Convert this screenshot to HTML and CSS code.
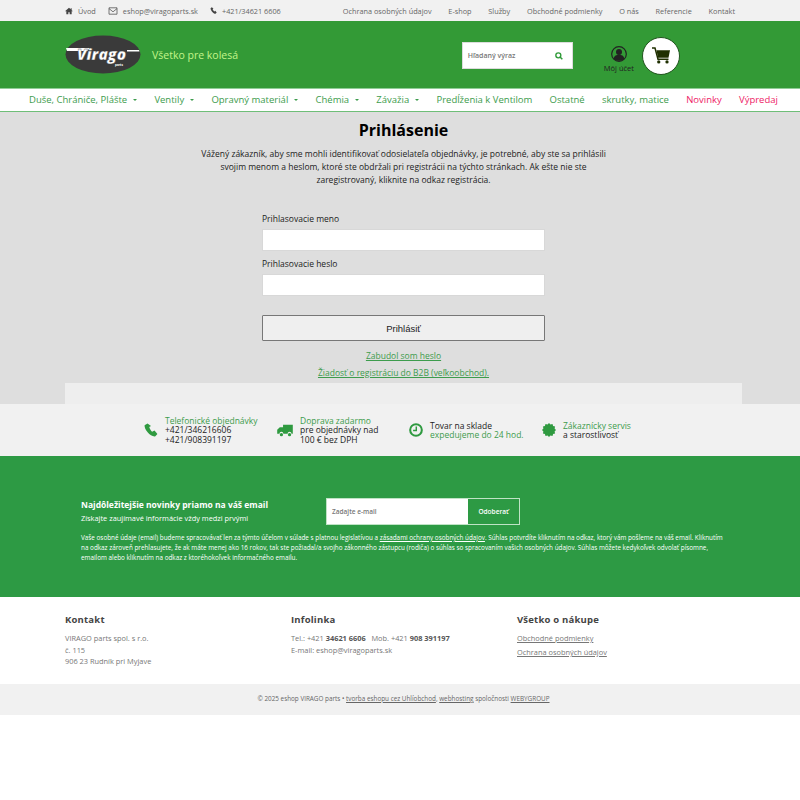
FILE: index.html
```html
<!DOCTYPE html>
<html lang="sk">
<head>
    <meta charset="UTF-8" />
    <title>Prihlásenie - VIRAGO parts</title>
    <link rel="stylesheet" href="styles.css">
</head>
<body>
    <div class="topbar">
        <div class="topbar-left">
            <a class="top-item" href="#">
                <svg width="8" height="8" viewBox="0 0 24 24"><path fill="#444" d="M12 2 0 13h4v9h6v-6h4v6h6v-9h4l-4-3.6V4h-3v2.7z"/></svg>
                <span>Úvod</span>
            </a>
            <a class="top-item" href="#">
                <svg width="10" height="8" viewBox="0 0 24 20"><path fill="none" stroke="#555" stroke-width="2" d="M2 2h20v16H2zM2 4l10 8 10-8"/></svg>
                <span>eshop@viragoparts.sk</span>
            </a>
            <a class="top-item" href="#">
                <svg width="7" height="7" viewBox="0 0 24 24"><path fill="#444" d="M6 1 2 4c-1 6 9 19 17 19l4-4-5-6-3 2c-2-1-5-5-6-8l3-2z"/></svg>
                <span>+421/34621 6606</span>
            </a>
        </div>
        <div class="topbar-right">
            <a href="#">Ochrana osobných údajov</a>
            <a href="#">E-shop</a>
            <a href="#">Služby</a>
            <a href="#">Obchodné podmienky</a>
            <a href="#">O nás</a>
            <a href="#">Referencie</a>
            <a href="#">Kontakt</a>
        </div>
    </div>

    <header class="header">
        <svg class="logo" width="76" height="39" viewBox="0 0 76 39">
            <ellipse cx="38" cy="19.500" rx="37.500" ry="19" fill="#3a3a3a"/>
            <path fill="#fff" d="M1 13h24l-3 3H2zM62 15h12l.5 1.500H62z"/>
            <text class="logo-text" x="12" y="25">Virago</text>
            <text class="logo-parts" x="50" y="31">parts</text>
        </svg>
        <div class="slogan">Všetko pre kolesá</div>
        <form class="search">
            <span>Hľadaný výraz</span>
            <svg width="8" height="8" viewBox="0 0 24 24"><circle cx="10" cy="10" r="7.500" fill="none" stroke="#2f9a38" stroke-width="4"/><path stroke="#2f9a38" stroke-width="4.500" d="m15 15 7 7"/></svg>
        </form>
        <a class="account" href="#">
            <svg width="16" height="16" viewBox="0 0 24 24">
                <circle cx="12" cy="12" r="11" fill="none" stroke="#222" stroke-width="1.800"/>
                <circle cx="12" cy="9" r="4.500" fill="#222"/>
                <path fill="#222" d="M4 19c1-5 4-6 8-6s7 1 8 6c-4 4-12 4-16 0z"/>
            </svg>
            <span>Môj účet</span>
        </a>
        <a class="cart" href="#">
            <svg width="18" height="17" viewBox="0 0 24 22">
                <path fill="#1f2f00" d="M6 4h18l-2 10H8z"/>
                <path fill="none" stroke="#1f2f00" stroke-width="2" d="M0 1h4l4 15h14"/>
                <circle cx="9" cy="19.500" r="2.200" fill="#1f2f00"/>
                <circle cx="20" cy="19.500" r="2.200" fill="#1f2f00"/>
            </svg>
        </a>
    </header>

    <nav class="menu">
        <a class="has-sub" href="#">Duše, Chrániče, Plášte</a>
        <a class="has-sub" href="#">Ventily</a>
        <a class="has-sub" href="#">Opravný materiál</a>
        <a class="has-sub" href="#">Chémia</a>
        <a class="has-sub" href="#">Závažia</a>
        <a href="#">Predĺženia k Ventilom</a>
        <a href="#">Ostatné</a>
        <a href="#">skrutky, matice</a>
        <a class="pink" href="#">Novinky</a>
        <a class="pink" href="#">Výpredaj</a>
    </nav>

    <main class="main">
        <h1>Prihlásenie</h1>
        <p class="intro">Vážený zákazník, aby sme mohli identifikovať odosielateľa objednávky, je potrebné, aby ste sa prihlásili svojim menom a heslom, ktoré ste obdržali pri registrácii na týchto stránkach. Ak ešte nie ste zaregistrovaný, kliknite na odkaz registrácia.</p>
        <form class="login">
            <label for="user">Prihlasovacie meno</label>
            <input id="user" type="text">
            <label for="pass">Prihlasovacie heslo</label>
            <input id="pass" type="password">
            <button type="button">Prihlásiť</button>
        </form>
        <a class="login-link" href="#">Zabudol som heslo</a>
        <a class="login-link" href="#">Žiadosť o registráciu do B2B (veľkoobchod).</a>
        <div class="main-end"></div>
    </main>

    <section class="benefits">
        <div class="benefit benefit-phone">
            <svg width="14" height="14" viewBox="0 0 24 24"><path fill="#2f9a40" d="M6 1 1 4c-1 7 10 20 18 19l4-4-5-6-4 2c-2-1-4-5-5-8l3-2z"/></svg>
            <div><em>Telefonické objednávky</em><br>+421/346216606<br>+421/908391197</div>
        </div>
        <div class="benefit benefit-truck">
            <svg width="16" height="13" viewBox="0 0 24 20"><path fill="#2f9a40" d="M9 1h15v14h-2a3 3 0 0 0-6 0H9.500a3 3 0 0 0-6 0H0V9l4-4h5z"/><circle cx="6.500" cy="16.500" r="2.500" fill="#2f9a40"/><circle cx="19" cy="16.500" r="2.500" fill="#2f9a40"/></svg>
            <div><em>Doprava zadarmo</em><br>pre objednávky nad<br>100 € bez DPH</div>
        </div>
        <div class="benefit benefit-clock">
            <svg width="14" height="14" viewBox="0 0 24 24"><circle cx="12" cy="12" r="10" fill="none" stroke="#2f9a40" stroke-width="3.500"/><path fill="none" stroke="#2f9a40" stroke-width="2.500" d="M12.500 6v7H7"/></svg>
            <div>Tovar na sklade<br><em>expedujeme do 24 hod.</em></div>
        </div>
        <div class="benefit benefit-servis">
            <svg width="14" height="14" viewBox="0 0 24 24"><path fill="#2f9a40" d="m12 0 2.500 2.400L18 1.600l1 3.400 3.400 1-.8 3.500L24 12l-2.400 2.500.8 3.500-3.400 1-1 3.400-3.500-.8L12 24l-2.500-2.400-3.500.8-1-3.400-3.400-1 .8-3.500L0 12l2.400-2.500L1.600 6 5 5l1-3.400 3.500.8z"/></svg>
            <div><em>Zákaznícky servis</em><br>a starostlivosť</div>
        </div>
    </section>

    <section class="newsletter">
        <div class="news-top">
            <div class="news-title">
                <strong>Najdôležitejšie novinky priamo na váš email</strong>
                <span>Získajte zaujímavé informácie vždy medzi prvými</span>
            </div>
            <form class="news-form">
                <span class="news-input">Zadajte e-mail</span>
                <span class="news-btn">Odoberať</span>
            </form>
        </div>
        <p class="news-note">Vaše osobné údaje (email) budeme spracovávať len za týmto účelom v súlade s platnou legislatívou a <a href="#">zásadami ochrany osobných údajov</a>. Súhlas potvrdíte kliknutím na odkaz, ktorý vám pošleme na váš email. Kliknutím na odkaz zároveň prehlasujete, že ak máte menej ako 16 rokov, tak ste požiadal/a svojho zákonného zástupcu (rodiča) o súhlas so spracovaním vašich osobných údajov. Súhlas môžete kedykoľvek odvolať písomne, emailom alebo kliknutím na odkaz z ktoréhokoľvek informačného emailu.</p>
    </section>

    <footer class="footer">
        <div class="foot-col">
            <h3>Kontakt</h3>
            <p>VIRAGO parts spol. s r.o.<br>č. 115<br>906 23 Rudník pri Myjave</p>
        </div>
        <div class="foot-col">
            <h3>Infolinka</h3>
            <p>Tel.: +421 <b>34621 6606</b> &nbsp; Mob. +421 <b>908 391197</b><br>E-mail: eshop@viragoparts.sk</p>
        </div>
        <div class="foot-col foot-links">
            <h3>Všetko o nákupe</h3>
            <a href="#">Obchodné podmienky</a>
            <a href="#">Ochrana osobných údajov</a>
        </div>
    </footer>

    <div class="copyright">© 2025 eshop VIRAGO parts • <a href="#">tvorba eshopu cez Uhlíobchod</a>, <a href="#">webhosting</a> spoločnosti <a href="#">WEBYGROUP</a></div>
</body>
</html>
```

FILE: styles.css
```css
* { box-sizing: border-box; }

body {
    margin: 0;
    background: #fff;
    font-family: 'Open Sans', 'Noto Sans', sans-serif;
    color: #222;
}

a { color: inherit; text-decoration: none; }

.topbar {
    height: 21px;
    background: #f1f1f1;
    padding: 0 65px;
    display: flex;
    justify-content: space-between;
    align-items: center;
    font-size: 7.300px;
    color: #666;
}
.topbar-left { display: flex; gap: 12px; }
.top-item { display: flex; align-items: center; gap: 5px; }
.topbar-right { display: flex; gap: 16.800px; }

.header {
    height: 68px;
    background: #339a36;
    border-bottom: 1px solid #8fce96;
    padding: 0 120px 0 65px;
    display: flex;
    align-items: center;
}
.logo { flex: none; }
.logo-text {
    font-size: 15.500px;
    font-weight: 800;
    font-style: italic;
    fill: #fff;
    stroke: #3a3a3a;
    stroke-width: 0.300px;
}
.logo-parts {
    font-size: 3px;
    font-weight: 700;
    fill: #fff;
}
.slogan {
    margin-left: 11px;
    font-size: 10.500px;
    color: #c4f58a;
    flex: 1;
}
.search {
    width: 111px;
    height: 27px;
    margin-top: 2px;
    background: #fff;
    border: 1px solid #dcdcdc;
    padding: 0 9px 0 5px;
    display: flex;
    justify-content: space-between;
    align-items: center;
    font-size: 7px;
    font-weight: 600;
    color: #777;
}
.account {
    margin: 9px 0 0 31px;
    display: flex;
    flex-direction: column;
    align-items: center;
    gap: 1px;
    font-size: 7.500px;
    color: #222;
}
.cart {
    margin: 2px 0 0 8px;
    width: 38px;
    height: 38px;
    border-radius: 50%;
    background: #fff;
    border: 1px solid #22551f;
    display: flex;
    justify-content: center;
    align-items: center;
}

.menu {
    height: 23px;
    background: #fff;
    border-bottom: 1px solid #6fbe78;
    padding: 0 22px 2px 29px;
    display: flex;
    justify-content: space-between;
    align-items: center;
    font-size: 9.500px;
    color: #3d9c4d;
}
.has-sub::after {
    content: "";
    display: inline-block;
    margin-left: 6px;
    vertical-align: 2px;
    border: 2.500px solid transparent;
    border-top-color: #3d9c4d;
    border-bottom: 0;
}
.pink { color: #ee2266; }

.main {
    height: 292px;
    background: #dedede;
    padding: 7px 58px 0 65px;
    display: flex;
    flex-direction: column;
    align-items: center;
}
h1 {
    margin: 0;
    font-size: 16px;
    line-height: 22px;
    font-weight: 700;
    color: #000;
}
.intro {
    width: 410px;
    margin: 6px 0 0;
    font-size: 8.500px;
    line-height: 13px;
    text-align: center;
    color: #222;
}
.login {
    width: 283px;
    margin-top: 26px;
    display: flex;
    flex-direction: column;
}
.login label {
    font-size: 8.500px;
    line-height: 13px;
    margin-bottom: 4px;
}
.login input {
    height: 22px;
    border: 1px solid #d8d8d8;
    background: #fff;
    margin-bottom: 6px;
}
.login button {
    height: 26px;
    margin-top: 13px;
    background: #efefef;
    border: 1px solid #777;
    border-radius: 1px;
    font-family: 'Liberation Sans', Arial, sans-serif;
    font-size: 9.500px;
    color: #222;
}
.login-link {
    margin-top: 10px;
    font-size: 8.500px;
    line-height: 10px;
    color: #3d9c4d;
    text-decoration: underline;
}
.login-link + .login-link { margin-top: 7px; }
.main-end {
    width: 677px;
    height: 21px;
    margin-top: auto;
    background: #eee;
}

.benefits {
    height: 52px;
    background: #f1f1f1;
    padding-left: 144px;
    display: flex;
    align-items: center;
    font-size: 8.500px;
    line-height: 9.500px;
    color: #222;
}
.benefit { display: flex; align-items: center; gap: 7px; }
.benefit em { font-style: normal; color: #3d9c4d; }
.benefit-phone { width: 133px; }
.benefit-truck { width: 132px; }
.benefit-clock { width: 133px; }

.newsletter {
    height: 141px;
    background: #2d9a44;
    padding: 42px 74px 0 81px;
    color: #fff;
}
.news-top { display: flex; }
.news-title {
    width: 245px;
    display: flex;
    flex-direction: column;
    gap: 2px;
    padding-top: 1px;
}
.news-title strong { font-size: 8.500px; line-height: 12px; }
.news-title span { font-size: 7.400px; line-height: 11px; }
.news-form {
    width: 194px;
    height: 27px;
    border: 1px solid #bfe3c5;
    display: flex;
    font-size: 6.500px;
    font-weight: 600;
}
.news-input {
    width: 141px;
    background: #fff;
    color: #777;
    padding-left: 5px;
    line-height: 25px;
}
.news-btn {
    flex: 1;
    text-align: center;
    line-height: 25px;
}
.news-note {
    margin: 8px 0 0;
    font-size: 6.350px;
    line-height: 10px;
}
.news-note a { text-decoration: underline; }

.footer {
    height: 87px;
    padding: 16px 65px 0;
    display: grid;
    grid-template-columns: 226px 226px 1fr;
    color: #777;
    font-size: 7.400px;
}
.foot-col h3 {
    margin: 0 0 6px;
    font-size: 9.500px;
    line-height: 14px;
    font-weight: 700;
    color: #444;
    letter-spacing: 0.200px;
}
.foot-col p { margin: 0; line-height: 11.500px; }
.foot-col b { font-weight: 700; color: #555; }
.foot-links a {
    display: block;
    line-height: 11.500px;
    margin-bottom: 2.500px;
    text-decoration: underline;
}

.copyright {
    height: 31px;
    background: #f1f1f1;
    padding-left: 7px;
    text-align: center;
    font-size: 6.350px;
    line-height: 30px;
    color: #666;
}
.copyright a { text-decoration: underline; }
```
